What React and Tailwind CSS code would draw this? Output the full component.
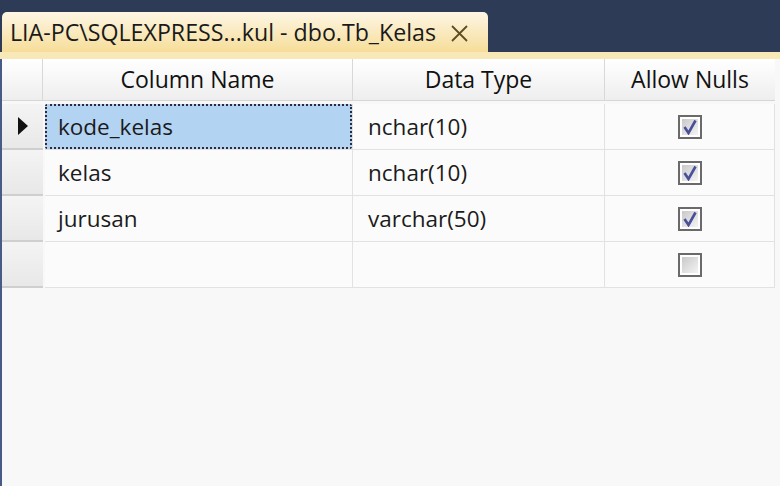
import React from "react";

const rows = [
  { name: "kode_kelas", type: "nchar(10)", nulls: true, current: true },
  { name: "kelas", type: "nchar(10)", nulls: true },
  { name: "jurusan", type: "varchar(50)", nulls: true },
  { name: "", type: "", nulls: false },
];

function Check({ on }) {
  return (
    <div className="w-[24px] h-[24px] border-2 border-[#6a6a6a] bg-white p-[2px]">
      <div className="w-full h-full bg-gradient-to-br from-[#c9c9c9] to-[#f4f4f4] flex items-center justify-center">
        {on && (
          <svg width="16" height="16" viewBox="0 0 16 16">
            <path d="M2.5 8 L6.5 14 L13.5 1.5" fill="none" stroke="#4a4f9a" strokeWidth="2.6" strokeLinejoin="miter" />
          </svg>
        )}
      </div>
    </div>
  );
}

export default function App() {
  return (
    <div
      className="w-[780px] h-[486px] overflow-hidden bg-[#f8f8f8] flex flex-col"
      style={{ fontFamily: '"Open Sans", "Noto Sans", sans-serif' }}
    >
      <div className="h-[52px] bg-[#2d3b57] flex items-end pl-[2px]">
        <div className="w-[486px] h-[40px] rounded-t-[5px] bg-gradient-to-b from-[#fdf6e4] to-[#f6dd98] flex items-center pl-[8px] pt-[2px] gap-[14px]">
          <span className="text-[23.2px] text-[#1a1a1a] leading-none">LIA-PC\SQLEXPRESS...kul - dbo.Tb_Kelas</span>
          <svg width="19" height="19" viewBox="0 0 19 19">
            <path d="M2 2 L17 17 M17 2 L2 17" stroke="#5e4d22" strokeWidth="1.8" />
          </svg>
        </div>
      </div>
      <div className="h-[7px] bg-[#f8e8b8]" />
      <div className="flex-1 flex border-l-[2px] border-[#4a5a86]">
        <div className="w-[773px] flex flex-col">
          <div className="h-[42px] flex bg-gradient-to-b from-[#ffffff] to-[#eeeeee] border-b border-[#d6d6d6] text-[23px] text-[#111]">
            <div className="w-[41px] border-r border-[#d8d8d8]" />
            <div className="w-[310px] border-r border-[#d8d8d8] flex items-center justify-center">Column Name</div>
            <div className="w-[252px] border-r border-[#d8d8d8] flex items-center justify-center">Data Type</div>
            <div className="w-[170px] flex items-center justify-center">Allow Nulls</div>
          </div>
          <div className="h-[3px]" />
          {rows.map((r, i) => (
            <div key={i} className="h-[46px] flex text-[22.5px] text-[#1b1b1b]">
              <div className="w-[41px] bg-gradient-to-b from-[#f4f4f4] to-[#e8e8e8] border-b-2 border-[#cfcfcf] mr-[2px] flex items-center justify-center">
                {r.current && (
                  <svg width="12" height="20" viewBox="0 0 12 20">
                    <path d="M1 1 L11 10 L1 19 Z" fill="#111" />
                  </svg>
                )}
              </div>
              <div className="w-[308px] border-r border-b border-[#e2e2e2] bg-[#fbfbfb] flex">
                {r.current ? (
                  <div className="flex-1 bg-[#b3d3f3] border-2 border-dotted border-[#2b2b3b] rounded-[2px] flex items-center pl-[11px]">
                    {r.name}
                  </div>
                ) : (
                  <div className="flex-1 flex items-center pl-[13px]">{r.name}</div>
                )}
              </div>
              <div className="w-[252px] border-r border-b border-[#e2e2e2] bg-[#fbfbfb] flex items-center pl-[15px]">{r.type}</div>
              <div className="w-[170px] border-b border-r border-[#e2e2e2] bg-[#fbfbfb] flex items-center justify-center">
                <Check on={r.nulls} />
              </div>
            </div>
          ))}
        </div>
      </div>
    </div>
  );
}
